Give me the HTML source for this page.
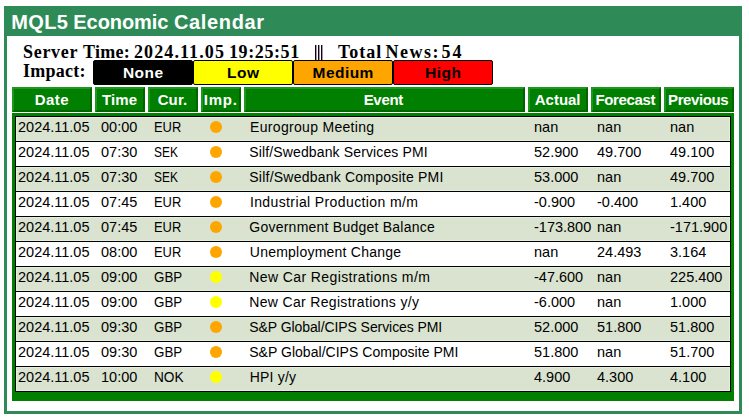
<!DOCTYPE html><html><head><meta charset="utf-8"><style>
*{margin:0;padding:0;box-sizing:border-box}
html,body{width:749px;height:417px;overflow:hidden;background:#fff;position:relative}
body{font-family:"Liberation Sans",sans-serif}
.a{position:absolute;white-space:nowrap}
#panel{left:4px;top:6px;width:738px;height:408px;border:3px solid #2E8B57}
#hdr{left:4px;top:6px;width:738px;height:30px;background:#2E8B57}
.ti{top:9px;color:#fff;font-weight:bold;font-size:20px;line-height:26px}
.sv{font-family:"Liberation Serif",serif;font-weight:bold;font-size:18px;line-height:20px;color:#000;letter-spacing:0.7px}
.btn{top:60px;height:25px;width:100px;border:1px solid #000;border-radius:2px;font-weight:bold;font-size:15.5px;line-height:24.5px;text-align:center;letter-spacing:0.45px;text-indent:0.45px}
.hc{top:87px;height:25px;background:#007F00;border-top:2px solid #1F961F;border-left:2px solid #1F961F;border-right:2px solid #006400;border-bottom:2px solid #006400;color:#fff;font-weight:bold;font-size:14.5px;line-height:23px;text-align:center}
.hl{top:90px;color:#fff;font-weight:bold;font-size:15px;line-height:20px}
#cont{left:12px;top:113px;width:722px;height:288px;background:#007F00}
.row{left:15px;width:716px;height:26px;border:1px solid #000}
.l{background:#D9E3CF;box-shadow:inset 0 0 0 1px #E4F0DD}
.w{background:#fff}
.t{top:-2px;line-height:24px;color:#000}
.n{font-size:14.5px}
.x{font-size:14px}
.dot{width:12px;height:12px;border-radius:50%}
</style></head><body>
<div class="a" id="panel"></div><div class="a" id="hdr"></div>
<div class="a ti" style="left:11.3px;letter-spacing:0.37px">MQL5</div>
<div class="a ti" style="left:73.3px;letter-spacing:-0.06px">Economic</div>
<div class="a ti" style="left:173.9px;letter-spacing:0.66px">Calendar</div>
<div class="a sv" style="left:23px;top:42px;letter-spacing:0.7px">Server</div>
<div class="a sv" style="left:83px;top:42px;letter-spacing:0.3px">Time:</div>
<div class="a sv" style="left:134px;top:42px;letter-spacing:1.1px">2024.11.05</div>
<div class="a sv" style="left:229px;top:42px;letter-spacing:0.6px">19:25:51</div>
<div class="a sv" style="left:338px;top:42px;letter-spacing:1.0px">Total</div>
<div class="a sv" style="left:385.5px;top:42px;letter-spacing:1.5px">News:</div>
<div class="a sv" style="left:441.5px;top:42px;letter-spacing:2.0px">54</div>
<div class="a sv" style="left:23px;top:61px;letter-spacing:0.25px">Impact:</div>
<div class="a" style="left:315px;top:45px;width:1px;height:15px;background:#1a001a"></div><div class="a" style="left:316px;top:45px;width:1px;height:15px;background:#9a9aa0"></div>
<div class="a" style="left:318px;top:45px;width:1px;height:15px;background:#1a001a"></div><div class="a" style="left:319px;top:45px;width:1px;height:15px;background:#9a9aa0"></div>
<div class="a" style="left:321px;top:45px;width:1px;height:15px;background:#1a001a"></div><div class="a" style="left:322px;top:45px;width:1px;height:15px;background:#9a9aa0"></div>
<div class="a btn" style="left:93px;background:#000;color:#fff">None</div>
<div class="a btn" style="left:193px;background:#FFFF00;color:#000">Low</div>
<div class="a btn" style="left:293px;background:#FFA500;color:#000">Medium</div>
<div class="a btn" style="left:393px;background:#FF0000;color:#000">High</div>
<div class="a hc" style="left:12px;width:80px"></div>
<div class="a hc" style="left:95px;width:50px"></div>
<div class="a hc" style="left:148px;width:50px"></div>
<div class="a hc" style="left:201px;width:40px"></div>
<div class="a hc" style="left:244px;width:281px"></div>
<div class="a hc" style="left:528px;width:60px"></div>
<div class="a hc" style="left:591px;width:70px"></div>
<div class="a hc" style="left:664px;width:70px"></div>
<div class="a hl" style="left:34.7px;letter-spacing:0.467px">Date</div>
<div class="a hl" style="left:101.9px;letter-spacing:0.167px">Time</div>
<div class="a hl" style="left:157.7px;letter-spacing:0.1px">Cur.</div>
<div class="a hl" style="left:203.8px;letter-spacing:0.767px">Imp.</div>
<div class="a hl" style="left:363.7px;letter-spacing:-0.325px">Event</div>
<div class="a hl" style="left:534.8px;letter-spacing:-0.02px">Actual</div>
<div class="a hl" style="left:595.4px;letter-spacing:-0.329px">Forecast</div>
<div class="a hl" style="left:668.1px;letter-spacing:-0.414px">Previous</div>
<div class="a" id="cont"></div>
<div class="a row l" style="top:116px">
<div class="a t n" style="left:2px">2024.11.05</div>
<div class="a t n" style="left:85px">00:00</div>
<div class="a t x" style="left:138.29999999999998px;transform:scaleX(0.9214);transform-origin:0 0">EUR</div>
<div class="a dot" style="left:193.5px;top:4px;background:#FFA500"></div>
<div class="a t x" style="left:234.1px;letter-spacing:0.306px">Eurogroup Meeting</div>
<div class="a t n" style="left:518px">nan</div>
<div class="a t n" style="left:581px">nan</div>
<div class="a t n" style="left:654px">nan</div>
</div>
<div class="a row w" style="top:141px">
<div class="a t n" style="left:2px">2024.11.05</div>
<div class="a t n" style="left:85px">07:30</div>
<div class="a t x" style="left:137.6px;transform:scaleX(0.8519);transform-origin:0 0">SEK</div>
<div class="a dot" style="left:193.5px;top:4px;background:#FFA500"></div>
<div class="a t x" style="left:233.3px;letter-spacing:0.132px">Silf/Swedbank Services PMI</div>
<div class="a t n" style="left:518px">52.900</div>
<div class="a t n" style="left:581px">49.700</div>
<div class="a t n" style="left:654px">49.100</div>
</div>
<div class="a row l" style="top:166px">
<div class="a t n" style="left:2px">2024.11.05</div>
<div class="a t n" style="left:85px">07:30</div>
<div class="a t x" style="left:137.6px;transform:scaleX(0.8519);transform-origin:0 0">SEK</div>
<div class="a dot" style="left:193.5px;top:4px;background:#FFA500"></div>
<div class="a t x" style="left:233.3px;letter-spacing:0.223px">Silf/Swedbank Composite PMI</div>
<div class="a t n" style="left:518px">53.000</div>
<div class="a t n" style="left:581px">nan</div>
<div class="a t n" style="left:654px">49.700</div>
</div>
<div class="a row w" style="top:191px">
<div class="a t n" style="left:2px">2024.11.05</div>
<div class="a t n" style="left:85px">07:45</div>
<div class="a t x" style="left:138.29999999999998px;transform:scaleX(0.9214);transform-origin:0 0">EUR</div>
<div class="a dot" style="left:193.5px;top:4px;background:#FFA500"></div>
<div class="a t x" style="left:233.9px;letter-spacing:0.387px">Industrial Production m/m</div>
<div class="a t n" style="left:518px">-0.900</div>
<div class="a t n" style="left:581px">-0.400</div>
<div class="a t n" style="left:654px">1.400</div>
</div>
<div class="a row l" style="top:216px">
<div class="a t n" style="left:2px">2024.11.05</div>
<div class="a t n" style="left:85px">07:45</div>
<div class="a t x" style="left:138.29999999999998px;transform:scaleX(0.9214);transform-origin:0 0">EUR</div>
<div class="a dot" style="left:193.5px;top:4px;background:#FFA500"></div>
<div class="a t x" style="left:233.3px;letter-spacing:0.237px">Government Budget Balance</div>
<div class="a t n" style="left:518px">-173.800</div>
<div class="a t n" style="left:581px">nan</div>
<div class="a t n" style="left:654px">-171.900</div>
</div>
<div class="a row w" style="top:241px">
<div class="a t n" style="left:2px">2024.11.05</div>
<div class="a t n" style="left:85px">08:00</div>
<div class="a t x" style="left:138.29999999999998px;transform:scaleX(0.9214);transform-origin:0 0">EUR</div>
<div class="a dot" style="left:193.5px;top:4px;background:#FFA500"></div>
<div class="a t x" style="left:233.8px;letter-spacing:0.228px">Unemployment Change</div>
<div class="a t n" style="left:518px">nan</div>
<div class="a t n" style="left:581px">24.493</div>
<div class="a t n" style="left:654px">3.164</div>
</div>
<div class="a row l" style="top:266px">
<div class="a t n" style="left:2px">2024.11.05</div>
<div class="a t n" style="left:85px">09:00</div>
<div class="a t x" style="left:137.9px;transform:scaleX(0.9536);transform-origin:0 0">GBP</div>
<div class="a dot" style="left:193.5px;top:4px;background:#FFFF00"></div>
<div class="a t x" style="left:233.3px;letter-spacing:0.392px">New Car Registrations m/m</div>
<div class="a t n" style="left:518px">-47.600</div>
<div class="a t n" style="left:581px">nan</div>
<div class="a t n" style="left:654px">225.400</div>
</div>
<div class="a row w" style="top:291px">
<div class="a t n" style="left:2px">2024.11.05</div>
<div class="a t n" style="left:85px">09:00</div>
<div class="a t x" style="left:137.9px;transform:scaleX(0.9536);transform-origin:0 0">GBP</div>
<div class="a dot" style="left:193.5px;top:4px;background:#FFFF00"></div>
<div class="a t x" style="left:233.3px;letter-spacing:0.325px">New Car Registrations y/y</div>
<div class="a t n" style="left:518px">-6.000</div>
<div class="a t n" style="left:581px">nan</div>
<div class="a t n" style="left:654px">1.000</div>
</div>
<div class="a row l" style="top:316px">
<div class="a t n" style="left:2px">2024.11.05</div>
<div class="a t n" style="left:85px">09:30</div>
<div class="a t x" style="left:137.9px;transform:scaleX(0.9536);transform-origin:0 0">GBP</div>
<div class="a dot" style="left:193.5px;top:4px;background:#FFA500"></div>
<div class="a t x" style="left:233.3px;letter-spacing:-0.078px">S&amp;P Global/CIPS Services PMI</div>
<div class="a t n" style="left:518px">52.000</div>
<div class="a t n" style="left:581px">51.800</div>
<div class="a t n" style="left:654px">51.800</div>
</div>
<div class="a row w" style="top:341px">
<div class="a t n" style="left:2px">2024.11.05</div>
<div class="a t n" style="left:85px">09:30</div>
<div class="a t x" style="left:137.9px;transform:scaleX(0.9536);transform-origin:0 0">GBP</div>
<div class="a dot" style="left:193.5px;top:4px;background:#FFA500"></div>
<div class="a t x" style="left:233.2px;letter-spacing:0.032px">S&amp;P Global/CIPS Composite PMI</div>
<div class="a t n" style="left:518px">51.800</div>
<div class="a t n" style="left:581px">nan</div>
<div class="a t n" style="left:654px">51.700</div>
</div>
<div class="a row l" style="top:366px">
<div class="a t n" style="left:2px">2024.11.05</div>
<div class="a t n" style="left:85px">10:00</div>
<div class="a t x" style="left:138.29999999999998px;transform:scaleX(0.9759);transform-origin:0 0">NOK</div>
<div class="a dot" style="left:193.5px;top:4px;background:#FFFF00"></div>
<div class="a t x" style="left:233.8px;letter-spacing:0.183px">HPI y/y</div>
<div class="a t n" style="left:518px">4.900</div>
<div class="a t n" style="left:581px">4.300</div>
<div class="a t n" style="left:654px">4.100</div>
</div>
</body></html>
